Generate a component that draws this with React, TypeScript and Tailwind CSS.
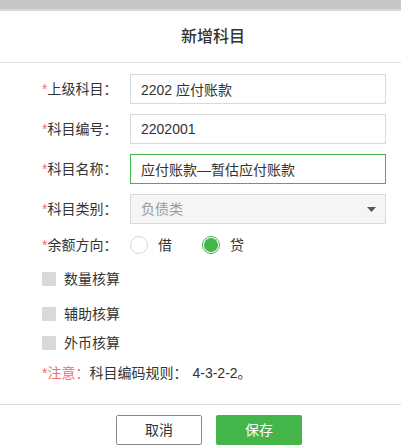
import { useState } from 'react';

const font = { fontFamily: '"Liberation Sans", "Noto Sans CJK SC", sans-serif' };

function Label({ text }: { text: string }) {
  return (
    <div className="w-[130px] shrink-0 pl-[42px] text-[14px] text-[#333]">
      <span className="text-[#f56c6c]">*</span>
      {text}：
    </div>
  );
}

function Radio({ checked, label, onClick }: { checked: boolean; label: string; onClick: () => void }) {
  return (
    <button type="button" onClick={onClick} className="flex items-center gap-[10px] mr-[30px]">
      {checked ? (
        <span className="w-[18px] h-[18px] rounded-full border border-[#44b549] flex items-center justify-center">
          <span className="w-[14px] h-[14px] rounded-full bg-[#44b549]" />
        </span>
      ) : (
        <span className="w-[18px] h-[18px] rounded-full border border-[#d9d9d9] bg-white" />
      )}
      <span className="text-[14px] text-[#333]">{label}</span>
    </button>
  );
}

function Check({ label, className }: { label: string; className: string }) {
  const [on, setOn] = useState(false);
  return (
    <div className={`flex items-center h-[22px] pl-[42px] ${className}`}>
      <button
        type="button"
        onClick={() => setOn(!on)}
        className={`w-[14px] h-[14px] ${on ? 'bg-[#44b549]' : 'bg-[#d9d9d9]'}`}
      />
      <span className="ml-[8px] text-[14px] text-[#333]">{label}</span>
    </div>
  );
}

export default function App() {
  const [dir, setDir] = useState<'debit' | 'credit'>('credit');

  return (
    <div className="w-[401px] h-[445px] overflow-hidden bg-white" style={font}>
      <div className="h-[9px] bg-[#c6c6c6]" />
      <div className="h-[2px] bg-[#d6d6d6]" />

      <div className="h-[52px] flex items-center justify-center pl-[25px] border-b border-[#e0e0e0]">
        <h1 className="text-[16px] text-[#333] font-medium">新增科目</h1>
      </div>

      <div className="pt-[11px]">
        <div className="flex items-center h-[30px] mb-[10px]">
          <Label text="上级科目" />
          <input
            defaultValue="2202 应付账款"
            className="w-[256px] h-[30px] border border-[#d9d9d9] px-[10px] text-[14px] text-[#333] outline-none"
          />
        </div>
        <div className="flex items-center h-[30px] mb-[10px]">
          <Label text="科目编号" />
          <input
            defaultValue="2202001"
            className="w-[256px] h-[30px] border border-[#d9d9d9] px-[10px] text-[14px] text-[#333] outline-none"
          />
        </div>
        <div className="flex items-center h-[30px] mb-[10px]">
          <Label text="科目名称" />
          <input
            defaultValue="应付账款—暂估应付账款"
            className="w-[256px] h-[30px] border border-[#44b549] px-[10px] text-[14px] text-[#333] outline-none"
          />
        </div>
        <div className="flex items-center h-[30px] mb-[10px]">
          <Label text="科目类别" />
          <div className="w-[256px] h-[30px] border border-[#d9d9d9] bg-[#f5f5f5] px-[10px] flex items-center justify-between">
            <span className="text-[14px] text-[#999]">负债类</span>
            <svg width="9" height="5" viewBox="0 0 9 5" className="mr-[-1px]">
              <path d="M0 0H9L4.5 5Z" fill="#555" />
            </svg>
          </div>
        </div>
        <div className="flex items-center h-[22px]">
          <Label text="余额方向" />
          <Radio checked={dir === 'debit'} label="借" onClick={() => setDir('debit')} />
          <Radio checked={dir === 'credit'} label="贷" onClick={() => setDir('credit')} />
        </div>

        <Check label="数量核算" className="mt-[12px]" />
        <Check label="辅助核算" className="mt-[13px]" />
        <Check label="外币核算" className="mt-[7px]" />

        <div className="flex items-center h-[22px] mt-[8px] pl-[42px] text-[14px] text-[#333]">
          <span className="text-[#f56c6c]">*注意：</span>
          <span>科目编码规则：</span>
          <span className="ml-[5px]">4-3-2-2。</span>
        </div>
      </div>

      <div className="mt-[20px] border-t border-[#dddddd] pt-[10px] flex justify-center gap-[14px] pl-[17px]">
        <button
          type="button"
          className="w-[86px] h-[30px] border border-[#8a8a8a] rounded-[2px] bg-white text-[14px] text-[#333]"
        >
          取消
        </button>
        <button type="button" className="w-[86px] h-[30px] rounded-[2px] bg-[#44b549] text-[14px] text-white">
          保存
        </button>
      </div>
    </div>
  );
}
